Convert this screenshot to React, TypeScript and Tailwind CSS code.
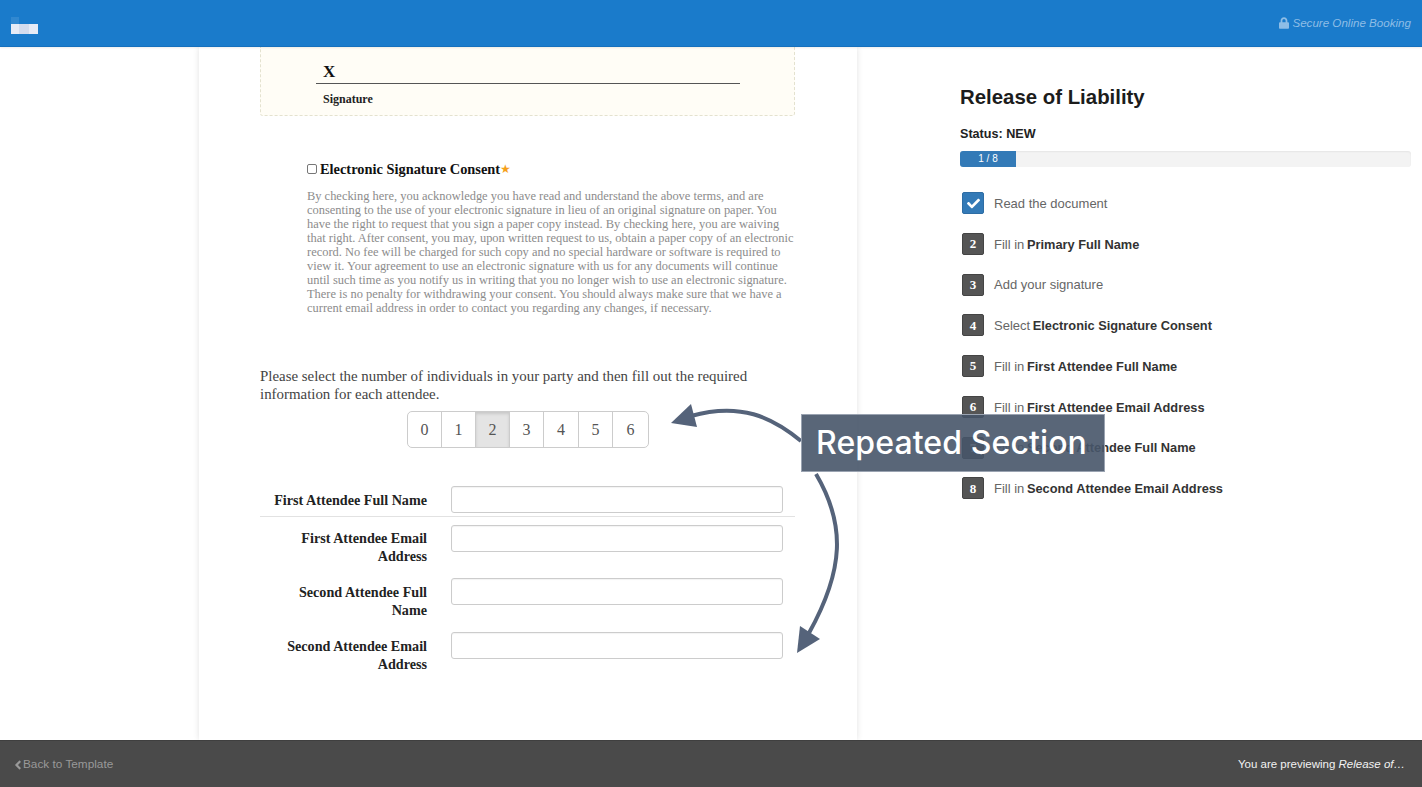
import React from "react";
import { FaCheck, FaLock, FaAngleLeft } from "react-icons/fa";

const serif = "[font-family:'Liberation_Serif',serif]";
const consent = [
  "By checking here, you acknowledge you have read and understand the above terms, and are",
  "consenting to the use of your electronic signature in lieu of an original signature on paper. You",
  "have the right to request that you sign a paper copy instead. By checking here, you are waiving",
  "that right. After consent, you may, upon written request to us, obtain a paper copy of an electronic",
  "record. No fee will be charged for such copy and no special hardware or software is required to",
  "view it. Your agreement to use an electronic signature with us for any documents will continue",
  "until such time as you notify us in writing that you no longer wish to use an electronic signature.",
  "There is no penalty for withdrawing your consent. You should always make sure that we have a",
  "current email address in order to contact you regarding any changes, if necessary.",
];
const steps: [string, string][] = [
  ["Read the document", ""],
  ["Fill in ", "Primary Full Name"],
  ["Add your signature", ""],
  ["Select ", "Electronic Signature Consent"],
  ["Fill in ", "First Attendee Full Name"],
  ["Fill in ", "First Attendee Email Address"],
  ["Fill in ", "Second Attendee Full Name"],
  ["Fill in ", "Second Attendee Email Address"],
];
const segWidths = ["w-[34px]", "w-[34px]", "w-[34px]", "w-[34px]", "w-[35px]", "w-[34px]", "w-[35px]"];

function Row({ label, h, mt, pt }: { label: string[]; h: string; mt: string; pt: string }) {
  return (
    <div className={`flex ${h} ${mt}`}>
      <div className={`w-[167px] ${pt} text-right text-[14.15px] leading-[18px] font-bold text-[#222]`}>
        {label.map((l) => (
          <div key={l} className="whitespace-nowrap">{l}</div>
        ))}
      </div>
      <div className="ml-[24px] h-[27px] w-[332px] rounded-[3px] border border-[#ccc] bg-white shadow-[inset_0_1px_1px_rgba(0,0,0,0.05)]" />
    </div>
  );
}

export default function App() {
  return (
    <div className="relative flex h-[787px] w-[1422px] flex-col overflow-hidden bg-white [font-family:'Liberation_Sans',sans-serif]">
      <header className="z-20 flex h-[47px] shrink-0 items-center justify-between border-b border-[#1570bd] bg-[#1a7bcb] pr-[11px] pl-[11px] shadow-[0_1px_2px_rgba(0,0,0,0.08)]">
        <div className="relative mt-[11px] h-[10px] w-[27px] bg-[#e6ebf6] blur-[0.5px]">
          <div className="absolute -top-[7px] left-0 h-[7px] w-[8px] bg-white/10" />
          <div className="absolute top-0 left-[8px] h-[10px] w-[10px] bg-[#d3dcee]" />
        </div>
        <div className="flex items-center gap-[3px] text-[11.6px] text-[#8ebde6] italic">
          <FaLock className="h-[12px] w-[10px]" />
          <span>Secure Online Booking</span>
        </div>
      </header>

      <main className="flex min-h-0 flex-1 overflow-hidden">
        <section className={`ml-[199px] h-full w-[658px] shrink-0 pr-[62px] pl-[61px] shadow-[0_0_6px_rgba(0,0,0,0.12)] ${serif}`}>
          <div className="h-[69px] rounded-b-[3px] border border-t-0 border-dashed border-[#e4e2cf] bg-[#fffdf6] pt-[14px] pl-[62px]">
            <div className="-ml-[7px] h-[23px] w-[424px] border-b border-[#555] pl-[7px] text-[17px] leading-[21px] font-bold text-[#111]">X</div>
            <div className="pt-[8px] text-[12px] leading-[14px] font-bold text-[#222]">Signature</div>
          </div>

          <div className="mt-[45px] ml-[47px] flex h-[18px] items-center">
            <span className="h-[10px] w-[10px] -translate-y-[1px] rounded-[2px] border border-[#777] bg-white" />
            <span className="ml-[3px] text-[14.4px] font-bold whitespace-nowrap text-[#111]">Electronic Signature Consent</span>
            <span className="-translate-y-[1px] text-[12px] leading-none text-[#f5a01a]">★</span>
          </div>
          <div className="mt-[10px] ml-[47px] text-[12.45px] leading-[14px] text-[#8c8c8c]">
            {consent.map((l) => (
              <div key={l} className="whitespace-nowrap">{l}</div>
            ))}
          </div>

          <p className="mt-[52px] w-[535px] text-[14.9px] leading-[18px] text-[#444]">
            Please select the number of individuals in your party and then fill out the required<br />information for each attendee.
          </p>
          <div className="mt-[8px] ml-[147px] flex h-[37px] w-[242px] overflow-hidden rounded-[5px] border border-[#ccc] text-[16px] text-[#555]">
            {["0", "1", "2", "3", "4", "5", "6"].map((n, i) => (
              <div
                key={n}
                className={`flex items-center justify-center ${segWidths[i]} ${i < 6 ? "border-r border-[#ccc]" : ""} ${n === "2" ? "bg-[#e4e4e4] shadow-[inset_0_2px_3px_rgba(0,0,0,0.12)]" : ""}`}
              >
                {n}
              </div>
            ))}
          </div>

          <div className="mt-[38px]">
            <Row label={["First Attendee Full Name"]} h="h-[30px]" mt="" pt="pt-[5px]" />
            <div className="h-px bg-[#e2e2e2]" />
            <Row label={["First Attendee Email", "Address"]} h="h-[44px]" mt="mt-[8px]" pt="pt-[4px]" />
            <Row label={["Second Attendee Full", "Name"]} h="h-[44px]" mt="mt-[9px]" pt="pt-[5px]" />
            <Row label={["Second Attendee Email", "Address"]} h="h-[44px]" mt="mt-[10px]" pt="pt-[5px]" />
          </div>
        </section>

        <aside className="ml-[103px] w-[451px] shrink-0 pt-[38px]">
          <h1 className="text-[20.4px] leading-[24px] font-bold text-[#1c1c1c]">Release of Liability</h1>
          <div className="mt-[17px] text-[12.6px] leading-[16px] font-bold text-[#222]">Status: NEW</div>
          <div className="mt-[9px] h-[16px] rounded-[3px] bg-[#f3f3f3] shadow-[inset_0_1px_2px_rgba(0,0,0,0.06)]">
            <div className="h-full w-[56px] rounded-l-[3px] bg-[#337ab7] text-center text-[10px] leading-[16px] text-white">1 / 8</div>
          </div>
          <ul className="mt-[25px] ml-[2px]">
            {steps.map(([a, b], i) => (
              <li key={a + b} className="mb-[18.75px] flex h-[22px] items-center">
                <span className={`flex h-[22px] w-[22px] shrink-0 items-center justify-center rounded-[2px] border text-[13px] font-bold text-white ${serif} ${i === 0 ? "border-[#2e6da4] bg-[#337ab7]" : "border-[#444] bg-[#555]"}`}>
                  {i === 0 ? <FaCheck className="h-[13px] w-[13px]" /> : i + 1}
                </span>
                <span className="mt-[1px] ml-[10px] text-[13px] whitespace-nowrap text-[#666]">
                  {a}
                  {b && <b className="-ml-[1px] text-[12.8px] text-[#333]">{b}</b>}
                </span>
              </li>
            ))}
          </ul>
        </aside>
      </main>

      <footer className="z-20 flex h-[47px] shrink-0 items-center justify-between border-t border-[#3f3f3f] bg-[#4a4a4a] pt-[1px] pr-[17px] pl-[13px] text-[11.5px]">
        <div className="flex items-center text-[#999]">
          <FaAngleLeft className="h-[14px] w-[10px]" />
          <span className="text-[11.8px]">Back to Template</span>
        </div>
        <div className="text-[#f2f2f2]">
          You are previewing <i>Release of…</i>
        </div>
      </footer>

      <svg className="pointer-events-none absolute top-0 left-0 z-30 h-[787px] w-[1422px]" viewBox="0 0 1422 787" fill="none">
        <path d="M801 441 C772 417 740 402 691 416" stroke="#55637a" strokeWidth="4" />
        <path d="M671 423 L691 404 L697 427 Z" fill="#55637a" />
        <path d="M816 474 C846 525 844 570 809 633" stroke="#55637a" strokeWidth="4" />
        <path d="M800 626 L820 639 L797 653 Z" fill="#55637a" />
      </svg>
      <div className="absolute top-[414px] left-[801px] z-30 flex h-[58px] w-[304px] items-center border border-[#9aa3b1] bg-[#475569e6] pl-[14px] text-[32px] font-medium tracking-[0.1px] whitespace-nowrap text-white [font-family:Inter,sans-serif]">
        Repeated Section
      </div>
    </div>
  );
}
